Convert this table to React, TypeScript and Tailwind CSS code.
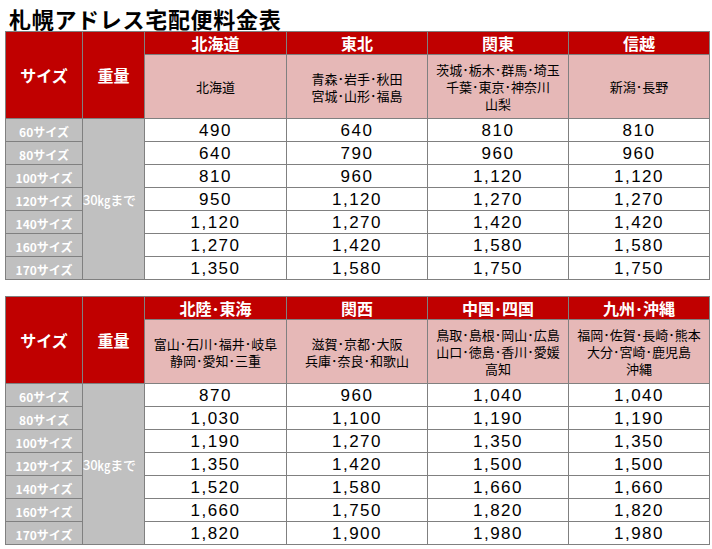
const SIZES = ["60", "80", "100", "120", "140", "160", "170"];

interface Region {
  name: string;
  areas: string[];
  prices: number[];
}

const TABLE1: Region[] = [
  { name: "北海道", areas: ["北海道"], prices: [490, 640, 810, 950, 1120, 1270, 1350] },
  { name: "東北", areas: ["青森･岩手･秋田", "宮城･山形･福島"], prices: [640, 790, 960, 1120, 1270, 1420, 1580] },
  { name: "関東", areas: ["茨城･栃木･群馬･埼玉", "千葉･東京･神奈川", "山梨"], prices: [810, 960, 1120, 1270, 1420, 1580, 1750] },
  { name: "信越", areas: ["新潟･長野"], prices: [810, 960, 1120, 1270, 1420, 1580, 1750] },
];

const TABLE2: Region[] = [
  { name: "北陸･東海", areas: ["富山･石川･福井･岐阜", "静岡･愛知･三重"], prices: [870, 1030, 1190, 1350, 1520, 1660, 1820] },
  { name: "関西", areas: ["滋賀･京都･大阪", "兵庫･奈良･和歌山"], prices: [960, 1100, 1270, 1420, 1580, 1750, 1900] },
  { name: "中国･四国", areas: ["鳥取･島根･岡山･広島", "山口･徳島･香川･愛媛", "高知"], prices: [1040, 1190, 1350, 1500, 1660, 1820, 1980] },
  { name: "九州･沖縄", areas: ["福岡･佐賀･長崎･熊本", "大分･宮崎･鹿児島", "沖縄"], prices: [1040, 1190, 1350, 1500, 1660, 1820, 1980] },
];

const cell = "border border-[#808080] p-0";

function PriceTable({ regions }: { regions: Region[] }) {
  return (
    <table className="ml-[5px] table-fixed border-collapse w-[704px]">
      <colgroup>
        <col className="w-[77px]" />
        <col className="w-[62px]" />
        <col className="w-[142px]" />
        <col className="w-[141px]" />
        <col className="w-[141px]" />
        <col className="w-[141px]" />
      </colgroup>
      <tbody>
        {/* region names */}
        <tr className="h-[23px]">
          <th rowSpan={2} className={`${cell} bg-[#c00000] text-white text-[16px] font-bold`}>
            サイズ
          </th>
          <th rowSpan={2} className={`${cell} bg-[#c00000] text-white text-[16px] font-bold`}>
            重量
          </th>
          {regions.map((r) => (
            <th key={r.name} className={`${cell} bg-[#c00000] text-white text-[16px] font-bold leading-[20px]`}>
              {r.name}
            </th>
          ))}
        </tr>
        {/* prefectures */}
        <tr className="h-[64px]">
          {regions.map((r) => (
            <td key={r.name} className={`${cell} bg-[#e6b8b7] text-center text-[13px] leading-[17px] text-black`}>
              {r.areas.map((a) => (
                <div key={a}>{a}</div>
              ))}
            </td>
          ))}
        </tr>
        {SIZES.map((s, i) => (
          <tr key={s} className="h-[23px]">
            <td className={`${cell} bg-[#c0c0c0] text-center text-white text-[12px] font-bold leading-[14px] pt-[4px]`}>
              {s}サイズ
            </td>
            {i === 0 && (
              <td rowSpan={7} className={`${cell} bg-[#c0c0c0] text-left text-white text-[13px] font-medium leading-[15px] tracking-[-0.2px]`}>
                30㎏まで
              </td>
            )}
            {regions.map((r) => (
              <td
                key={r.name}
                className={`${cell} bg-white text-center text-black text-[17px] leading-[20px] tracking-[1.5px] pt-[2px] font-['Liberation_Sans',sans-serif]`}
              >
                {r.prices[i].toLocaleString("en-US")}
              </td>
            ))}
          </tr>
        ))}
      </tbody>
    </table>
  );
}

export default function App() {
  return (
    <div className="w-[712px] h-[549px] bg-white overflow-hidden font-['Noto_Sans_CJK_JP',sans-serif]">
      <h1 className="h-[31px] pt-[5px] pl-[9px] text-[22px] leading-[26px] font-bold tracking-[0.7px] text-black">
        札幌アドレス宅配便料金表
      </h1>
      <PriceTable regions={TABLE1} />
      <div className="h-[16px]" />
      <PriceTable regions={TABLE2} />
    </div>
  );
}
